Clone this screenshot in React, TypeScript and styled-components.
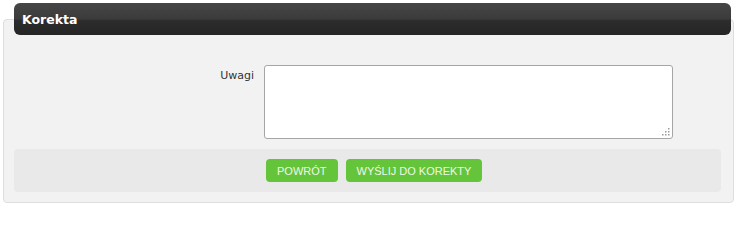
import React from "react";
import styled, { createGlobalStyle } from "styled-components";

const Global = createGlobalStyle`
  html, body { margin: 0; padding: 0; background: #ffffff; }
  body { font-family: "DejaVu Sans", Verdana, sans-serif; }
`;

const Wrapper = styled.div`
  padding: 3px 4px 0 3px;
  width: 731px;
`;

const Header = styled.div`
  position: relative;
  z-index: 1;
  margin: 0 3px 0 11px;
  height: 32px;
  border-radius: 6px;
  background: linear-gradient(#464646 0%, #3b3b3b 50%, #2c2c2c 55%, #252525 100%);
  display: flex;
  align-items: center;
  padding-left: 8px;
`;

const Title = styled.h2`
  margin: 0;
  font-family: "DejaVu Sans", Verdana, sans-serif;
  font-weight: bold;
  font-size: 12.5px;
  color: #ffffff;
`;

const Panel = styled.div`
  margin-top: -16px;
  height: 184px;
  box-sizing: border-box;
  background: #f2f2f2;
  border: 1px solid #dedede;
  border-radius: 4px;
  padding: 45px 10px 0 10px;
  width: 731px;
`;

const FormRow = styled.div`
  display: grid;
  grid-template-columns: 240px 409px;
  column-gap: 10px;
  align-items: start;
`;

const Label = styled.label`
  text-align: right;
  font-size: 11px;
  color: #333333;
  padding-top: 4px;
`;

const FieldBox = styled.div`
  position: relative;
  width: 409px;
  height: 74px;
`;

const TextArea = styled.textarea`
  width: 409px;
  height: 74px;
  box-sizing: border-box;
  border: 1px solid #a6a6a6;
  border-radius: 3px;
  background: #ffffff;
  font-family: "DejaVu Sans", Verdana, sans-serif;
  font-size: 11px;
  padding: 3px;
  margin: 0;
  display: block;
  resize: none;
  outline: none;
`;

const Grip = styled.svg`
  position: absolute;
  right: 3px;
  bottom: 3px;
  width: 9px;
  height: 9px;
  pointer-events: none;
`;

const Footer = styled.div`
  margin-top: 10px;
  width: 707px;
  height: 43px;
  box-sizing: border-box;
  background: #e9e9e9;
  border-radius: 4px;
  display: flex;
  align-items: center;
  gap: 8px;
  padding-left: 252px;
`;

const Button = styled.button`
  height: 23px;
  padding: 0 11px;
  border: none;
  border-radius: 4px;
  background: #64c43a;
  color: #eef8e8;
  font-family: "Liberation Sans", Arial, sans-serif;
  font-size: 11px;
  text-transform: uppercase;
  cursor: pointer;
`;

export default function App() {
  return (
    <>
      <Global />
      <Wrapper>
        <Header>
          <Title>Korekta</Title>
        </Header>
        <Panel>
          <FormRow>
            <Label htmlFor="uwagi">Uwagi</Label>
            <FieldBox>
              <TextArea id="uwagi" />
              <Grip viewBox="0 0 9 9">
                <g fill="#9a9a9a">
                  <rect x="7" y="1" width="1.5" height="1.5" />
                  <rect x="4" y="4" width="1.5" height="1.5" />
                  <rect x="7" y="4" width="1.5" height="1.5" />
                  <rect x="1" y="7" width="1.5" height="1.5" />
                  <rect x="4" y="7" width="1.5" height="1.5" />
                  <rect x="7" y="7" width="1.5" height="1.5" />
                </g>
              </Grip>
            </FieldBox>
          </FormRow>
          <Footer>
            <Button type="button">Powrót</Button>
            <Button type="button">Wyślij do korekty</Button>
          </Footer>
        </Panel>
      </Wrapper>
    </>
  );
}
